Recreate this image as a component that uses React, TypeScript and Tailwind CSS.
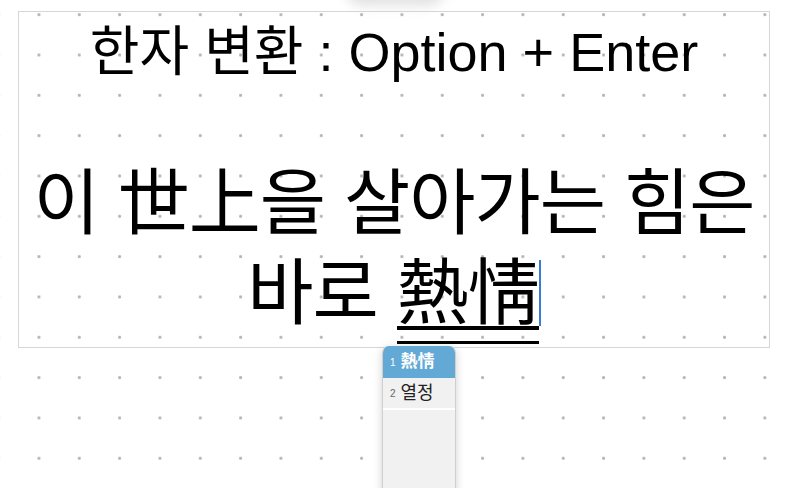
import React from 'react';

const font = { fontFamily: '"Liberation Sans", "Noto Sans CJK KR", sans-serif' };

function CandidateMenu() {
  return (
    <div className="absolute left-[382px] top-[346px] w-[74px] h-[160px] rounded-t-[7px] bg-[#f2f1f1] border-x border-[#cfcfcf] shadow-[0_2px_10px_rgba(0,0,0,0.18)] overflow-hidden">
      <div className="flex items-center h-[32px] bg-[#62a9d6] pl-[7px] gap-[5px]">
        <span className="text-[10px] text-white">1</span>
        <span className="text-[17px] font-bold text-white">熱情</span>
      </div>
      <div className="flex items-center h-[32px] pl-[7px] gap-[5px] border-b-2 border-white">
        <span className="text-[10px] text-[#666]">2</span>
        <span className="text-[18px] text-[#222]">열정</span>
      </div>
    </div>
  );
}

export default function App() {
  return (
    <div
      className="relative w-[800px] h-[488px] overflow-hidden bg-white bg-[radial-gradient(circle_at_center,#b3b3b3_1.2px,transparent_1.8px)] bg-[length:40.33px_40.33px] bg-[position:18.8px_-5.5px]"
      style={font}
    >
      {/* shadow of a popover sitting above the view */}
      <div className="absolute left-[345px] top-[-30px] w-[100px] h-[36px] rounded-full bg-[#cfcfcf] blur-[6px] opacity-60" />

      <div className="ml-[18px] mt-[11px] w-[752px] h-[337px] border border-[#d6d6d6] flex flex-col items-center text-black">
        <div className="mt-[6px] text-[54px] leading-[68px]">한자 변환 : Option + Enter</div>
        <div className="mt-[72px] flex flex-col items-center text-[72px] leading-[90px] tracking-[-1px]">
          <div>이 世上을 살아가는 힘은</div>
          <div className="flex items-center">
            <span>바로&nbsp;</span>
            <span className="relative inline-block">
              熱情
              <span className="absolute left-0 right-0 top-[78px] h-[4px] bg-black" />
              <span className="absolute left-0 right-0 top-[93px] h-[3px] bg-black" />
            </span>
            <span className="inline-block w-[2px] h-[66px] bg-[#3b7bd8]" />
          </div>
        </div>
      </div>

      <CandidateMenu />
    </div>
  );
}
